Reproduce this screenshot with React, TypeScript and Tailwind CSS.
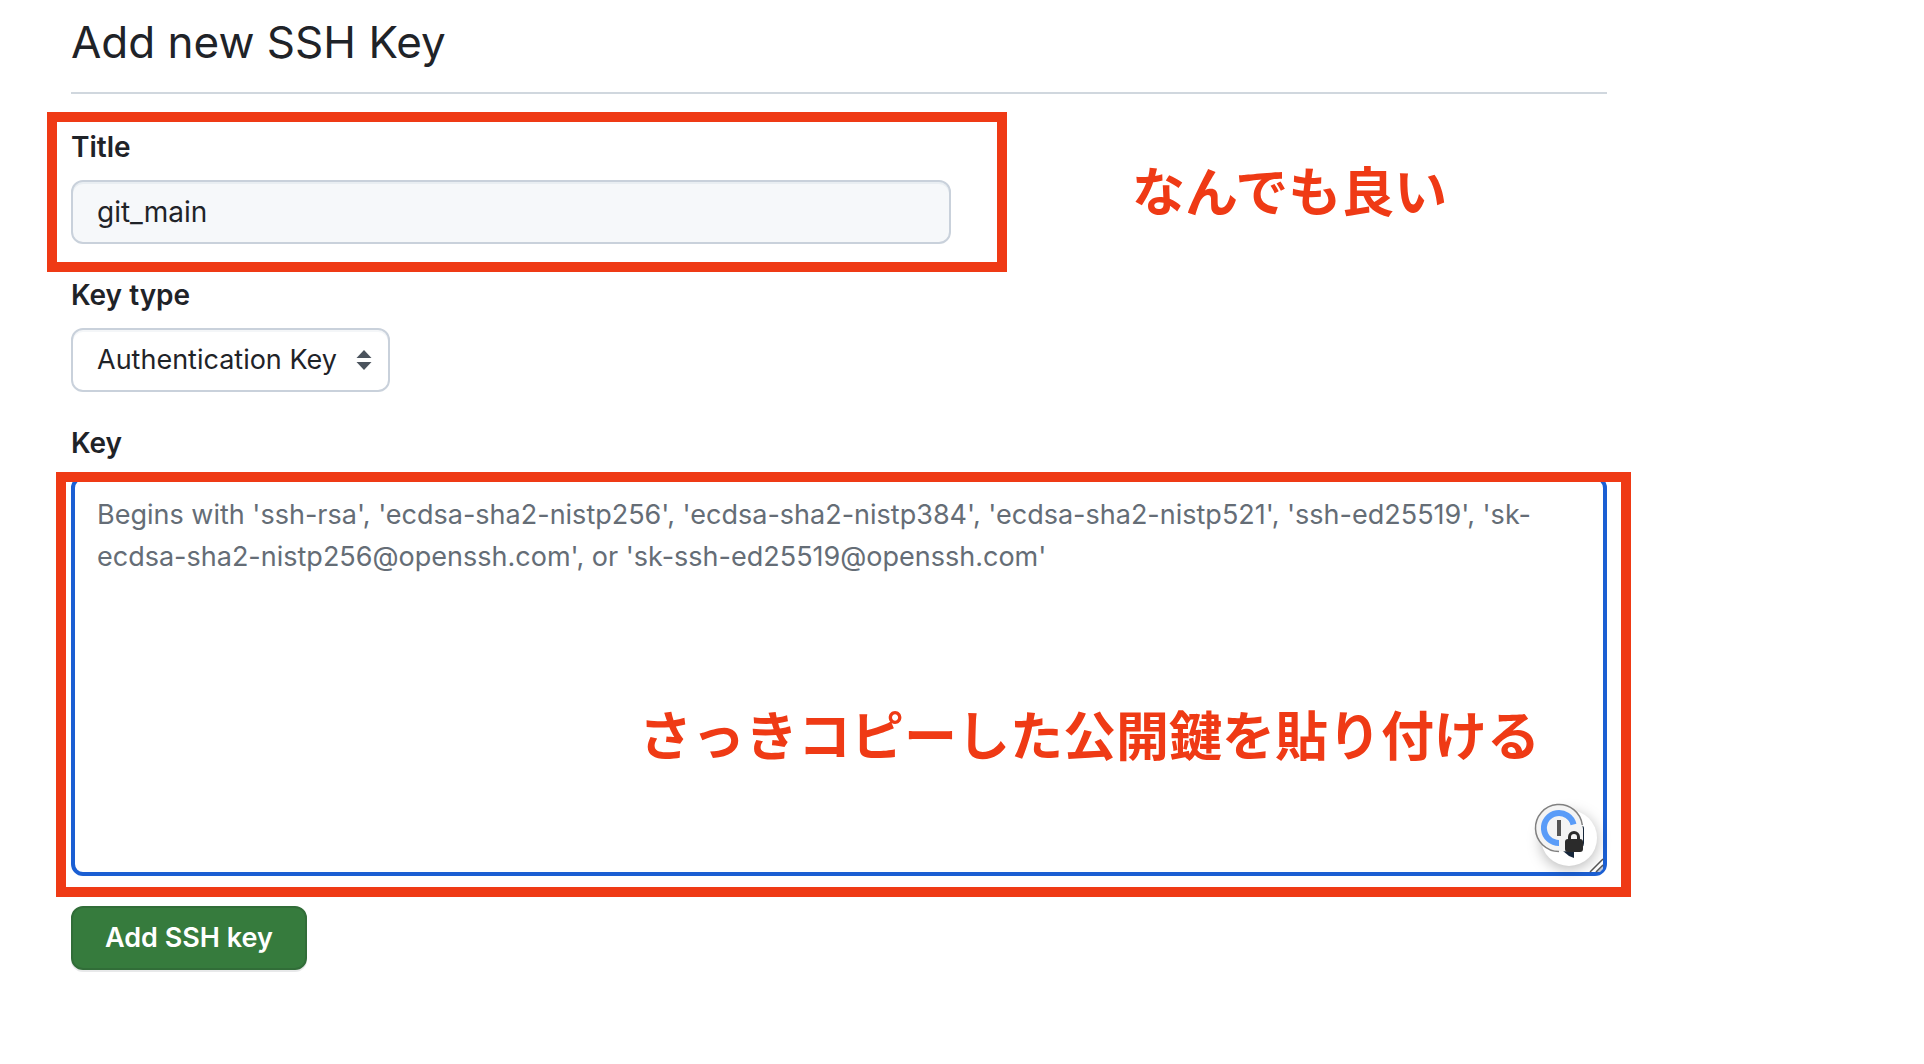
import type { ReactNode } from 'react';

const PLACEHOLDER =
  "Begins with 'ssh-rsa', 'ecdsa-sha2-nistp256', 'ecdsa-sha2-nistp384', 'ecdsa-sha2-nistp521', 'ssh-ed25519', 'sk-ecdsa-sha2-nistp256@openssh.com', or 'sk-ssh-ed25519@openssh.com'";

function Field({ id, label, children }: { id: string; label: string; children: ReactNode }) {
  return (
    <div className="relative mb-[30px]">
      <label htmlFor={id} className="mb-3 block w-fit font-semibold">
        {label}
      </label>
      {children}
    </div>
  );
}

function Note({ children }: { children: ReactNode }) {
  return (
    <span className="font-['Noto_Sans_CJK_JP',sans-serif] text-[53px] leading-[64px] font-bold whitespace-nowrap text-[#ef3a15]">
      {children}
    </span>
  );
}

function SelectArrows() {
  return (
    <svg viewBox="0 0 16 20" className="h-5 w-4" fill="#4b535d">
      <path d="M8 0 15.5 8H.5Z" />
      <path d="M8 20 .5 12h15Z" />
    </svg>
  );
}

// Password manager badge plus the textarea's resize grip
function PasswordBadge() {
  return (
    <svg viewBox="0 0 77 78" className="h-[78px] w-[77px] overflow-visible" fill="none">
      <circle cx="39" cy="40" r="28" fill="#fff" className="drop-shadow-[0_3px_7px_rgba(0,0,0,0.28)]" />
      <path d="M51 28q3-1 3 3v14q0 3-2 4Z" fill="#16263a" />
      <path d="M33 53h11v7l-5-2Z" fill="#16263a" />
      <path d="M29 53.500a23.500 23.500 0 1 1 23.300-26.500l.7 4v16l-6 6Z" fill="#f4f4f4" />
      <path d="M29 53.500a23.500 23.500 0 1 1 23.300-26.500" stroke="#808080" strokeWidth="1.500" />
      <path d="M29 45a15 15 0 1 1 14.500-18.500" stroke="#5a9cf8" strokeWidth="6" />
      <path d="M27 22h4v16h-4z" fill="#555" />
      <rect x="35" y="41" width="18" height="13" rx="3" fill="#2b2b2b" />
      <path d="M39.500 42v-3a4.500 4.500 0 0 1 9 0v3" stroke="#2b2b2b" strokeWidth="3" />
      <path d="M67 74 73 68v3l-3 3Z" fill="#b9c6dc" />
      <path d="M60 74 73 61M66 74l7-7" stroke="#555" strokeWidth="1.500" />
    </svg>
  );
}

export default function App() {
  return (
    <main className="min-h-screen bg-white px-[71px] pt-1.5 pb-20 font-['Inter',sans-serif] text-[28px] leading-[42px] text-[#1f2328]">
      <form className="max-w-[1536px]" onSubmit={(e) => e.preventDefault()}>
        <h1 className="mb-8 border-b-2 border-[#d0d7de] pb-[14px] text-[44px] leading-[72px]">Add new SSH Key</h1>

        <Field id="title" label="Title">
          <input
            id="title"
            type="text"
            defaultValue="git_main"
            className="block h-16 w-full max-w-[880px] rounded-xl border-2 border-[#c9d1db] bg-[#f6f8fa] px-6 shadow-[inset_0_2px_0_#e9eef2] outline-none"
          />
          <div className="pointer-events-none absolute -top-[14px] -bottom-7 -left-6 w-[960px] border-10 border-[#ef3a15]" />
          <div className="pointer-events-none absolute top-[31px] left-[1061px] flex">
            <Note>なんでも良い</Note>
          </div>
        </Field>

        <Field id="key-type" label="Key type">
          <div className="relative w-fit">
            <select
              id="key-type"
              className="block h-16 w-[319px] appearance-none rounded-xl border-2 border-[#c9d1db] bg-white pr-10 pl-6 text-[27px] shadow-[inset_0_2px_0_#f4f6f8] outline-none"
            >
              <option>Authentication Key</option>
              <option>Signing Key</option>
            </select>
            <div className="pointer-events-none absolute inset-y-0 right-[18px] flex items-center">
              <SelectArrows />
            </div>
          </div>
        </Field>

        <Field id="key" label="Key">
          <div className="relative">
            <textarea
              id="key"
              placeholder={PLACEHOLDER}
              className="block h-[400px] w-full resize-none rounded-xl border-4 border-[#1b5fd3] px-[22px] py-[14px] text-[27px] outline-none placeholder:text-[#656d76]"
            />
            <div className="pointer-events-none absolute right-0 bottom-0 flex">
              <PasswordBadge />
            </div>
            <div className="pointer-events-none absolute -top-1 -right-6 -bottom-[21px] -left-[15px] border-10 border-[#ef3a15]" />
            <div className="pointer-events-none absolute right-[67px] bottom-[111px] flex">
              <Note>さっきコピーした公開鍵を貼り付ける</Note>
            </div>
          </div>
        </Field>

        <button
          type="submit"
          className="h-16 rounded-xl border-2 border-[#316d38] bg-[#367b3d] px-8 text-[27px] font-semibold text-white shadow-[0_2px_0_#e8e9ea]"
        >
          Add SSH key
        </button>
      </form>
    </main>
  );
}
